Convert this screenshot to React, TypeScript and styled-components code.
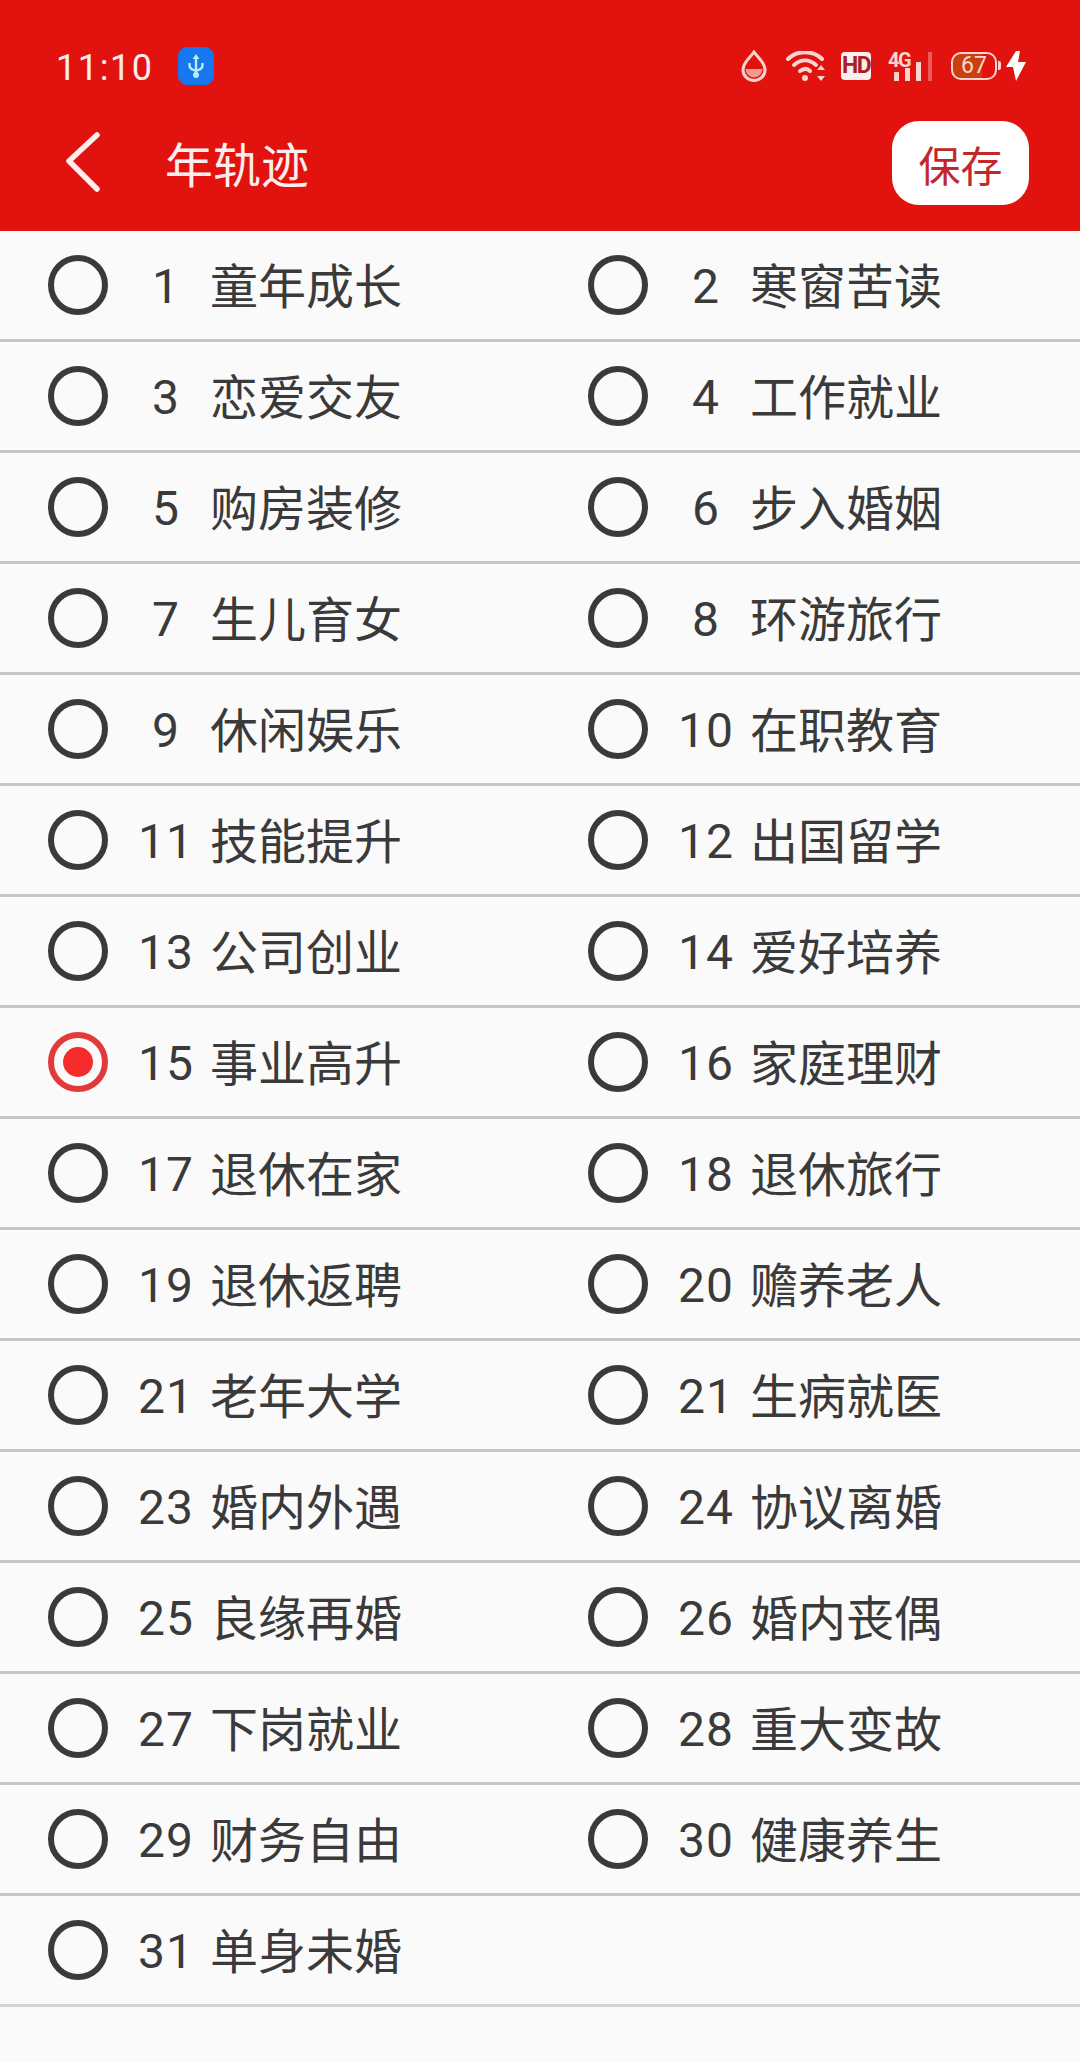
import React from 'react';
import styled, { createGlobalStyle } from 'styled-components';

const GlobalStyle = createGlobalStyle`
  html, body {
    margin: 0;
    padding: 0;
    background: #fafafa;
  }
  body {
    font-family: Roboto, "Noto Sans CJK SC", sans-serif;
  }
`;

const Page = styled('div')`
  width: 1080px;
  height: 2061px;
  overflow: hidden;
  background: #fafafa;
`;

const Header = styled('header')`
  height: 231px;
  background: #e2130f;
  color: #fdeeee;
`;

const StatusBar = styled('div')`
  height: 110px;
  padding: 22px 54px 0 56px;
  box-sizing: border-box;
  display: flex;
  align-items: center;
`;

const Clock = styled('span')`
  font-size: 36px;
  letter-spacing: 1.6px;
  margin: 3px 24px 0 0;
`;

const UsbBadge = styled('span')`
  width: 36px;
  height: 38px;
  border-radius: 9px;
  background: #1677ee;
  display: flex;
  align-items: center;
  justify-content: center;
`;

const StatusIcons = styled('div')`
  margin-left: auto;
  display: flex;
  align-items: center;
`;

const DropSvg = styled('svg')`
  margin-right: 19px;
`;

const SignalSvg = styled('svg')`
  margin-top: -6px;
`;

const HdBadge = styled('span')`
  width: 30px;
  height: 28px;
  margin: 0 17px 0 15px;
  border-radius: 4px;
  background: #fdeeee;
  color: #a82024;
  font-size: 23px;
  font-weight: 700;
  line-height: 28px;
  letter-spacing: -1.5px;
  text-align: center;
`;

const Battery = styled('span')`
  position: relative;
  width: 46px;
  height: 28px;
  margin: 0 9px 0 18px;
  border: 2.5px solid #fbd4cf;
  border-radius: 10px;
  box-sizing: border-box;
  color: #fbd4cf;
  font-size: 23px;
  line-height: 23px;
  text-align: center;
  background: linear-gradient(90deg, #c9400f 0 68%, transparent 68%);
  background-clip: padding-box;
  &::after {
    content: '';
    position: absolute;
    right: -6px;
    top: 7px;
    width: 3px;
    height: 9px;
    border-radius: 0 2px 2px 0;
    background: #fbd4cf;
  }
`;

const Toolbar = styled('div')`
  height: 121px;
  padding: 0 51px 0 64px;
  box-sizing: border-box;
  display: flex;
  align-items: flex-start;
`;

const BackButton = styled('span')`
  display: block;
  width: 40px;
  height: 66px;
  margin-top: 19px;
`;

const Title = styled('h1')`
  margin: 24px 0 0 61px;
  font-size: 48px;
  font-weight: 400;
  line-height: 66px;
`;

const SaveButton = styled('button')`
  margin: 11px 0 0 auto;
  width: 137px;
  height: 84px;
  border: 0;
  border-radius: 27px;
  background: #fff;
  color: #c1272b;
  font-family: inherit;
  font-size: 42px;
  padding: 0;
`;

const Grid = styled('div')`
  display: grid;
  grid-template-columns: 540px 540px;
`;

const Item = styled('div')<{ $last?: boolean }>`
  height: 111px;
  box-sizing: border-box;
  padding-left: 48px;
  display: flex;
  align-items: center;
  border-bottom: 3px solid ${(p) => (p.$last ? '#d4d4d4' : '#c6c6c6')};
  color: #3a3a3a;
  font-size: 48px;
`;

const Radio = styled('span')<{ $checked?: boolean }>`
  width: 60px;
  height: 60px;
  box-sizing: border-box;
  border-radius: 50%;
  border: 6px solid ${(p) => (p.$checked ? '#e23a3a' : '#3a3a3a')};
  display: flex;
  align-items: center;
  justify-content: center;
  &::before {
    content: '';
    display: ${(p) => (p.$checked ? 'block' : 'none')};
    width: 30px;
    height: 30px;
    border-radius: 50%;
    background: #f42c2c;
  }
`;

const Num = styled('span')`
  width: 64px;
  margin: 2px 0 0 26px;
  text-align: center;
  letter-spacing: 1px;
`;

const Label = styled('span')`
  margin: 0 0 5px 12px;
  font-family: "Noto Sans CJK SC", sans-serif;
  font-weight: 400;
  line-height: 60px;
`;

const options: [string, string][] = [
  ['1', '童年成长'], ['2', '寒窗苦读'], ['3', '恋爱交友'], ['4', '工作就业'],
  ['5', '购房装修'], ['6', '步入婚姻'], ['7', '生儿育女'], ['8', '环游旅行'],
  ['9', '休闲娱乐'], ['10', '在职教育'], ['11', '技能提升'], ['12', '出国留学'],
  ['13', '公司创业'], ['14', '爱好培养'], ['15', '事业高升'], ['16', '家庭理财'],
  ['17', '退休在家'], ['18', '退休旅行'], ['19', '退休返聘'], ['20', '赡养老人'],
  ['21', '老年大学'], ['21', '生病就医'], ['23', '婚内外遇'], ['24', '协议离婚'],
  ['25', '良缘再婚'], ['26', '婚内丧偶'], ['27', '下岗就业'], ['28', '重大变故'],
  ['29', '财务自由'], ['30', '健康养生'], ['31', '单身未婚'],
];

const UsbIcon = () => (
  <svg width="18" height="24" viewBox="0 0 18 24" fill="none" stroke="#b5ecf7" strokeWidth="2.4">
    <path d="M9 3v18M2.500 9v2q0 3.500 3 4.500L9 17M15.500 9v2q0 3.500-3 4.500L9 17" />
    <path d="M9 0l3.500 5h-7z" fill="#b5ecf7" stroke="none" />
    <circle cx="9" cy="21" r="3" fill="#b5ecf7" stroke="none" />
  </svg>
);

const DropIcon = () => (
  <DropSvg width="26" height="32" viewBox="0 0 26 32">
    <path d="M13 2C9 8 2 12 2 20a11 10.500 0 0 0 22 0C24 12 17 8 13 2z" fill="none" stroke="#fbd4cf" strokeWidth="3" />
    <path d="M4.500 19h17a8.500 8.500 0 0 1-17 0z" fill="#f29a92" />
  </DropSvg>
);

const WifiIcon = () => (
  <svg width="40" height="31" viewBox="0 0 40 31" fill="none" stroke="#fbd4cf" strokeWidth="4" strokeLinecap="round">
    <path d="M2 8C11-1 27-1 36 8" />
    <path d="M8 14c7-6 15-6 22 0" />
    <path d="M14 20c4-3 7-3 10 0" />
    <circle cx="19" cy="27" r="3" fill="#fbd4cf" stroke="none" />
    <path d="M35 14l-4 5h8zM35 30l-4-5h8z" fill="#fbd4cf" stroke="none" />
  </svg>
);

const SignalIcon = () => (
  <SignalSvg width="45" height="37" viewBox="0 -6 45 37">
    <text x="0" y="16" fontFamily="Roboto, sans-serif" fontSize="20" fontWeight="700" fill="#fbd4cf" letterSpacing="-1.500">4G</text>
    <g fill="#fbd4cf">
      <rect x="6" y="21" width="5" height="9" />
      <rect x="17" y="17" width="5" height="13" />
      <rect x="28" y="11" width="5" height="19" />
    </g>
    <rect x="40" y="1" width="4" height="29" fill="#ee5a58" />
  </SignalSvg>
);

const BoltIcon = () => (
  <svg width="20" height="30" viewBox="0 0 20 30">
    <path d="M10 0L0 16h7l3 14 10-19h-8l2-11z" fill="#fff" />
  </svg>
);

const BackIcon = () => (
  <svg width="40" height="66" viewBox="0 0 40 66" fill="none" stroke="#fdeeee" strokeWidth="5.500" strokeLinecap="round" strokeLinejoin="round">
    <path d="M33 6L5 32l28 28" />
  </svg>
);

export default function App() {
  return (
    <Page>
      <GlobalStyle />
      <Header>
        <StatusBar>
          <Clock>11:10</Clock>
          <UsbBadge><UsbIcon /></UsbBadge>
          <StatusIcons>
            <DropIcon />
            <WifiIcon />
            <HdBadge>HD</HdBadge>
            <SignalIcon />
            <Battery>67</Battery>
            <BoltIcon />
          </StatusIcons>
        </StatusBar>
        <Toolbar>
          <BackButton><BackIcon /></BackButton>
          <Title>年轨迹</Title>
          <SaveButton>保存</SaveButton>
        </Toolbar>
      </Header>
      <Grid>
        {options.map(([num, label], i) => (
          <Item key={i} $last={i >= 30}>
            <Radio $checked={num === '15'} />
            <Num>{num}</Num>
            <Label>{label}</Label>
          </Item>
        ))}
        <Item $last />
      </Grid>
    </Page>
  );
}
